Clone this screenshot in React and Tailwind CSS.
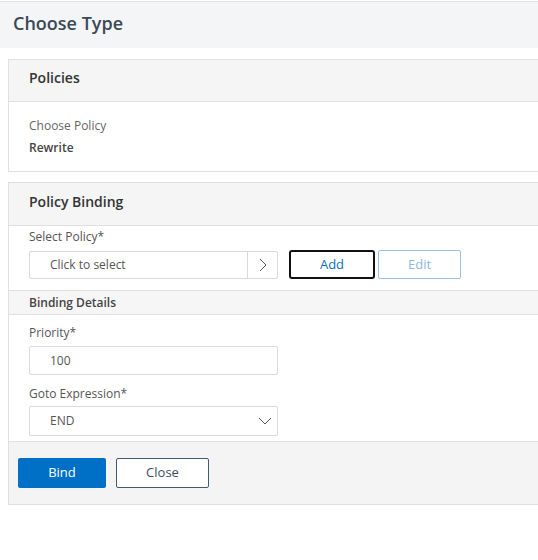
import React from 'react';

function Label({ children }) {
  return <div className="text-[12px] leading-[16px] text-[#555]">{children}</div>;
}

export default function App() {
  return (
    <div className="w-[538px] h-[560px] bg-white overflow-hidden font-['Open_Sans',sans-serif]">
      {/* Page title */}
      <div className="mt-px h-[47px] border-t border-[#e2e2e2] bg-[#f4f5f6] flex items-center pl-[13px]">
        <h1 className="text-[18px] font-semibold text-[#3b4858] leading-none -mt-[5px]">Choose Type</h1>
      </div>

      {/* Policies */}
      <div className="ml-[8px] mt-[11px] border-l border-t border-b border-[#e0e0e0]">
        <div className="h-[42px] bg-[#f5f5f5] border-b border-[#e0e0e0] flex items-center pl-[20px] pb-[6px]">
          <span className="text-[14px] font-semibold text-[#333]">Policies</span>
        </div>
        <div className="h-[69px] pl-[20px] pt-[15px]">
          <div className="text-[12px] leading-[18px] text-[#666]">Choose Policy</div>
          <div className="text-[12px] leading-[18px] font-semibold text-[#444] mt-[4px]">Rewrite</div>
        </div>
      </div>

      {/* Policy Binding */}
      <div className="ml-[8px] mt-[10px] border-l border-t border-b border-[#e0e0e0]">
        <div className="h-[43px] bg-[#f5f5f5] border-b border-[#e0e0e0] flex items-center pl-[20px] pb-[6px]">
          <span className="text-[14px] font-semibold text-[#333]">Policy Binding</span>
        </div>

        <div className="pl-[20px] pt-[3px] pb-[11px]">
          <Label>Select Policy*</Label>
          <div className="flex items-center mt-[5px]">
            <div className="w-[249px] h-[28px] border border-[#d9d9d9] rounded-[2px] flex">
              <div className="flex-1 flex items-center pl-[20px] text-[12px] text-[#555]">Click to select</div>
              <div className="w-[30px] border-l border-[#d9d9d9] flex items-center justify-center">
                <svg width="8" height="14" viewBox="0 0 8 14" fill="none" stroke="#555" strokeWidth="1">
                  <path d="M1 1l6 6-6 6" />
                </svg>
              </div>
            </div>
            <button className="ml-[11px] w-[86px] h-[29px] border-2 border-[#111] rounded-[3px] text-[13px] text-[#0a6fc2] bg-white">
              Add
            </button>
            <button className="ml-[3px] w-[83px] h-[29px] border border-[#9cc2e0] rounded-[2px] text-[13px] text-[#8fb8dc] bg-white">
              Edit
            </button>
          </div>
        </div>

        <div className="h-[25px] bg-[#f6f6f6] border-t border-b border-[#e0e0e0] flex items-center pl-[20px]">
          <span className="text-[12px] font-semibold text-[#444]">Binding Details</span>
        </div>

        <div className="pl-[20px] pt-[10px] pb-[5px]">
          <Label>Priority*</Label>
          <div className="mt-[5px] w-[249px] h-[29px] border border-[#d9d9d9] rounded-[2px] flex items-center pl-[20px] text-[12px] text-[#555]">
            100
          </div>
          <div className="mt-[11px]">
            <Label>Goto Expression*</Label>
          </div>
          <div className="mt-[4px] w-[249px] h-[30px] border border-[#d9d9d9] rounded-[2px] flex items-center justify-between pl-[20px] pr-[5px] text-[12px] text-[#555]">
            <span>END</span>
            <svg width="14" height="8" viewBox="0 0 14 8" fill="none" stroke="#555" strokeWidth="1">
              <path d="M1 1l6 6 6-6" />
            </svg>
          </div>
        </div>

        <div className="h-[63px] bg-[#f4f4f4] border-t border-[#e0e0e0] flex items-center pl-[9px] gap-[10px]">
          <button className="w-[88px] h-[30px] bg-[#0070c6] rounded-[2px] text-[13px] text-white">Bind</button>
          <button className="w-[93px] h-[30px] bg-white border border-[#3f5b73] rounded-[2px] text-[13px] text-[#3d4f61]">
            Close
          </button>
        </div>
      </div>
    </div>
  );
}
